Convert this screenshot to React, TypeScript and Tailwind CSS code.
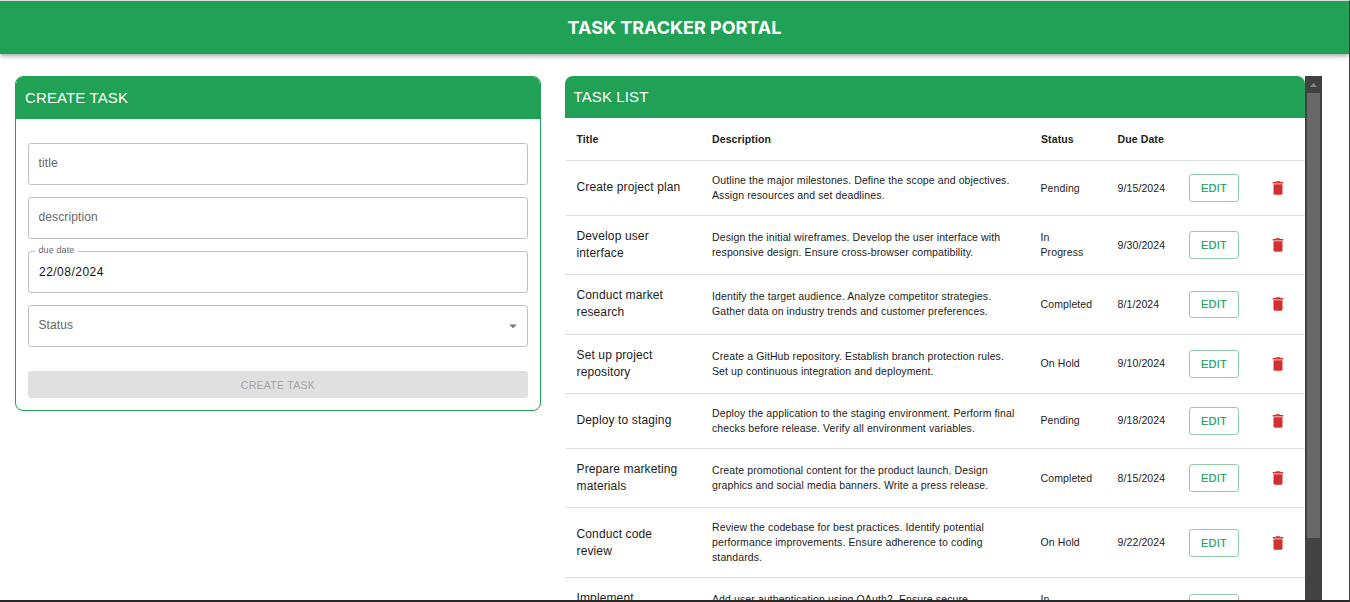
import React from "react";

type Task = {
  title: string[];
  description: string[];
  status: string[];
  due: string;
  row: string;
};

const tasks: Task[] = [
  {
    title: ["Create project plan"],
    description: ["Outline the major milestones. Define the scope and objectives.", "Assign resources and set deadlines."],
    status: ["Pending"],
    due: "9/15/2024",
    row: "h-[55.03px]",
  },
  {
    title: ["Develop user", "interface"],
    description: ["Design the initial wireframes. Develop the user interface with", "responsive design. Ensure cross-browser compatibility."],
    status: ["In", "Progress"],
    due: "9/30/2024",
    row: "h-[59.32px]",
  },
  {
    title: ["Conduct market", "research"],
    description: ["Identify the target audience. Analyze competitor strategies.", "Gather data on industry trends and customer preferences."],
    status: ["Completed"],
    due: "8/1/2024",
    row: "h-[59.32px]",
  },
  {
    title: ["Set up project", "repository"],
    description: ["Create a GitHub repository. Establish branch protection rules.", "Set up continuous integration and deployment."],
    status: ["On Hold"],
    due: "9/10/2024",
    row: "h-[59.32px]",
  },
  {
    title: ["Deploy to staging"],
    description: ["Deploy the application to the staging environment. Perform final", "checks before release. Verify all environment variables."],
    status: ["Pending"],
    due: "9/18/2024",
    row: "h-[55.03px]",
  },
  {
    title: ["Prepare marketing", "materials"],
    description: ["Create promotional content for the product launch. Design", "graphics and social media banners. Write a press release."],
    status: ["Completed"],
    due: "8/15/2024",
    row: "h-[59.32px]",
  },
  {
    title: ["Conduct code", "review"],
    description: ["Review the codebase for best practices. Identify potential", "performance improvements. Ensure adherence to coding", "standards."],
    status: ["On Hold"],
    due: "9/22/2024",
    row: "h-[70.05px]",
  },
  {
    title: ["Implement", "authentication"],
    description: ["Add user authentication using OAuth2. Ensure secure", "login and session handling."],
    status: ["In", "Progress"],
    due: "9/25/2024",
    row: "h-[59.32px]",
  },
];

const columns = "grid grid-cols-[135.5px_328.5px_77px_71.5px_75px_1fr] pl-[11.5px]";

function Lines({ text }: { text: string[] }) {
  return (
    <>
      {text.map((line) => (
        <span key={line} className="block whitespace-nowrap">
          {line}
        </span>
      ))}
    </>
  );
}

function TrashIcon() {
  return (
    <svg viewBox="0 0 24 24" className="size-[18px] fill-[#d32f2f]">
      <path d="M6 19c0 1.1.9 2 2 2h8c1.1 0 2-.9 2-2V7H6v12zM19 4h-3.5l-1-1h-5l-1 1H5v2h14V4z" />
    </svg>
  );
}

function TaskRow({ task }: { task: Task }) {
  return (
    <div className={`${columns} ${task.row} shrink-0 items-center border-b border-[#e0e0e0] text-[10.5px] leading-[15.015px] tracking-[0.11px] text-[#1c1c1c]`}>
      <div className="text-[12px] leading-[17.16px] tracking-[0.13px]">
        <Lines text={task.title} />
      </div>
      <div>
        <Lines text={task.description} />
      </div>
      <div>
        <Lines text={task.status} />
      </div>
      <div>{task.due}</div>
      <button className="h-[27.5px] w-[50px] rounded-[3px] border border-[#90cfa9] pt-[0.8px] text-[11px] leading-none font-medium tracking-[0.2px] text-[#20a155] [-webkit-text-stroke:0.2px_#20a155]">
        EDIT
      </button>
      <div className="flex pl-[4.5px]">
        <TrashIcon />
      </div>
    </div>
  );
}

function Field({ label }: { label: string }) {
  return (
    <div className="flex h-[42px] items-center rounded-[3px] border border-[#c0c0c0] px-[9.5px] pb-[3px] text-[12px] tracking-[0.11px] text-[#666]">
      {label}
    </div>
  );
}

function CreateTask() {
  return (
    <section className="h-[335px] w-[526px] shrink-0 overflow-hidden rounded-[8px] border border-[#20a155]">
      <h2 className="h-[42px] bg-[#20a155] pl-[9px] text-[15px] leading-[41px] tracking-[0.13px] text-white">CREATE TASK</h2>
      <div className="flex flex-col gap-3 px-3 pt-6">
        <Field label="title" />
        <Field label="description" />
        <div className="relative flex h-[42px] items-center rounded-[3px] border border-[#c0c0c0] px-[10px] text-[12px] tracking-[0.48px] text-[#111]">
          22/08/2024
          <span className="absolute -top-[8px] left-[5.5px] bg-white px-1 text-[9px] leading-3 tracking-[0.1px] text-[#666]">due date</span>
        </div>
        <div className="flex h-[42px] items-center justify-between rounded-[3px] border border-[#c0c0c0] pr-[5px] pl-[9.5px] text-[12px] tracking-[0.11px] text-[#666]">
          <span className="pb-[3px]">Status</span>
          <svg viewBox="0 0 24 24" className="size-[18px] fill-[#757575]">
            <path d="M7 10l5 5 5-5z" />
          </svg>
        </div>
        <button className="mt-3 h-[27px] rounded-[3px] bg-[#e0e0e0] pt-[2px] text-[10.5px] tracking-[0.28px] text-[#a6a6a6]">CREATE TASK</button>
      </div>
    </section>
  );
}

function TaskList() {
  return (
    <section className="flex h-[524px] w-[757px] shrink-0 overflow-hidden">
      <div className="flex w-[740px] flex-col">
        <h2 className="h-[42px] shrink-0 rounded-t-[8px] bg-[#20a155] pl-[8.5px] text-[15px] leading-[41px] tracking-[0.11px] text-white">TASK LIST</h2>
        <div className={`${columns} h-[43px] shrink-0 items-center border-b border-[#e0e0e0] pt-px text-[10.5px] font-bold tracking-[0.11px] text-[#212121]`}>
          <span>Title</span>
          <span>Description</span>
          <span className="pl-[0.5px]">Status</span>
          <span>Due Date</span>
        </div>
        {tasks.map((task) => (
          <TaskRow key={task.title[0]} task={task} />
        ))}
      </div>
      <div className="flex w-[17px] flex-col items-center bg-[#424242]">
        <div className="flex h-[17px] items-center pt-px">
          <svg viewBox="0 0 7 4" className="h-1 w-[7px] fill-[#868686]">
            <path d="M0 4L3.5 0L7 4z" />
          </svg>
        </div>
        <div className="h-[445px] w-[13px] bg-[#686868]" />
      </div>
    </section>
  );
}

export default function App() {
  return (
    <div className="flex h-[602px] w-[1350px] flex-col overflow-hidden border-t border-r border-b-2 border-t-[#dcdcdc] border-r-[#3c3c3c] border-b-[#2b2727] bg-white font-['Liberation_Sans',Arial,sans-serif]">
      <header className="flex h-[53px] shrink-0 items-center justify-center bg-[#20a155] shadow-[0_1.5px_3px_-0.75px_rgba(0,0,0,0.2),0_3px_3.75px_rgba(0,0,0,0.14),0_0.75px_7.5px_rgba(0,0,0,0.12)]">
        <h1 className="font-['Inter',sans-serif] text-[18px] font-bold text-white">TASK TRACKER PORTAL</h1>
      </header>
      <main className="flex gap-6 pt-[22px] pl-[15px]">
        <CreateTask />
        <TaskList />
      </main>
    </div>
  );
}
